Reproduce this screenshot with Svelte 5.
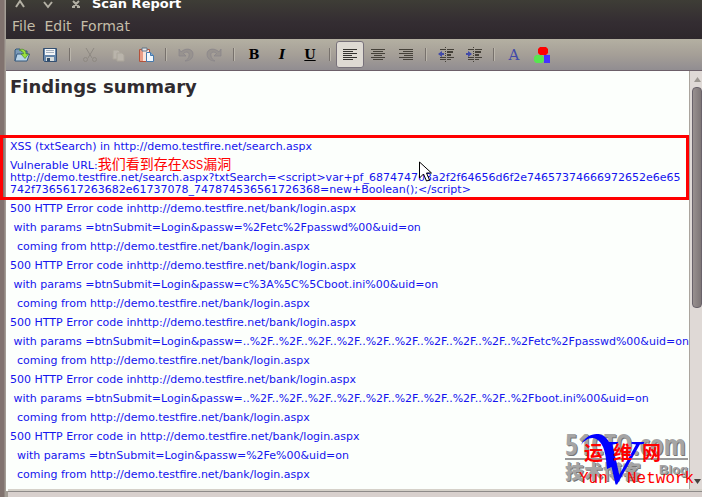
<script>
    const findings = [
        {
            title: '500 HTTP Error code inhttp://demo.testfire.net/bank/login.aspx',
            params: ' with params =btnSubmit=Login&passw=%2Fetc%2Fpasswd%00&uid=on'
        },
        {
            title: '500 HTTP Error code inhttp://demo.testfire.net/bank/login.aspx',
            params: ' with params =btnSubmit=Login&passw=c%3A%5C%5Cboot.ini%00&uid=on'
        },
        {
            title: '500 HTTP Error code inhttp://demo.testfire.net/bank/login.aspx',
            params: ' with params =btnSubmit=Login&passw=..%2F..%2F..%2F..%2F..%2F..%2F..%2F..%2F..%2F..%2Fetc%2Fpasswd%00&uid=on'
        },
        {
            title: '500 HTTP Error code inhttp://demo.testfire.net/bank/login.aspx',
            params: ' with params =btnSubmit=Login&passw=..%2F..%2F..%2F..%2F..%2F..%2F..%2F..%2F..%2F..%2Fboot.ini%00&uid=on'
        },
        {
            title: '500 HTTP Error code in http://demo.testfire.net/bank/login.aspx',
            params: '  with params =btnSubmit=Login&passw=%2Fe%00&uid=on'
        }
    ];
    const source = '  coming from http://demo.testfire.net/bank/login.aspx';
    const vulnerableUrl =
        'http://demo.testfire.net/search.aspx?txtSearch=<script>var+pf_687474703a2f2f64656d6f2e74657374666972652e6e65742f7365617263682e61737078_747874536561726368=new+Boolean();</' + 'script>';

    let align = 'left';
</script>

<div class="frame">
    <header>
        <div class="titlebar">
            <button aria-label="Minimize">
                <svg width="12" height="12" viewBox="0 0 12 12"><path d="M2 7l4-6 4 6" /></svg>
            </button>
            <button aria-label="Maximize">
                <svg width="12" height="12" viewBox="0 0 12 12"><path d="M2 2l4 5 4-5" /></svg>
            </button>
            <button aria-label="Close">
                <svg width="12" height="12" viewBox="0 0 12 12"><path d="M3 1l6 6M9 1L3 7M2 7h3M7 7h3" /></svg>
            </button>
            <span class="title">Scan Report</span>
        </div>
        <nav>
            <button>File</button>
            <button>Edit</button>
            <button>Format</button>
        </nav>
    </header>

    <div class="toolbar" role="toolbar">
        <button aria-label="Open">
            <svg width="16" height="16" viewBox="0 0 16 16">
                <path d="M1 14V3l1-1h4l1 2h6v4" fill="#7c9ab8" stroke="#35587c" />
                <path d="M1 14l2-7h12.500l-2.500 7z" fill="#b9d4e8" stroke="#35587c" />
                <path d="M5 3c4-2 7 0 7 4h2.500L11 11.500 7 7h2.500C9.500 5 8 4 5 3z" fill="#9be03c" stroke="#4b8a28" stroke-width=".7" />
            </svg>
        </button>
        <button aria-label="Save">
            <svg width="16" height="16" viewBox="0 0 16 16">
                <path d="M1.500 1.500h13v13h-12l-1-1z" fill="#6586aa" stroke="#344f70" />
                <path d="M3 2h10v6H3z" fill="#f4f6f7" />
                <path d="M4 3.500h8M4 5.500h8" stroke="#a4b1bf" />
                <path d="M4 10h8v4H4z" fill="#d8dddd" />
                <path d="M5 11h3v3H5z" fill="#304c6a" />
            </svg>
        </button>
        <i></i>
        <button aria-label="Cut" disabled>
            <svg width="16" height="16" viewBox="0 0 16 16" fill="none" stroke="#8e8982">
                <path d="M4 1l6 10M12 1L6 11" />
                <circle cx="3.500" cy="12.500" r="2" />
                <circle cx="12.500" cy="12.500" r="2" />
            </svg>
        </button>
        <button aria-label="Copy" disabled>
            <svg width="16" height="16" viewBox="0 0 16 16" fill="#b9b4ab" stroke="#aaa59a">
                <path d="M3 3h5l2 2v7H3z" />
                <path d="M7 6h5l2 2v6H7z" />
            </svg>
        </button>
        <button aria-label="Paste">
            <svg width="16" height="16" viewBox="0 0 16 16">
                <path d="M1.500 2.500h10v12h-10z" fill="#f9e4da" stroke="#b2523b" />
                <path d="M2 3h3v11H2z" fill="#e89c86" />
                <path d="M4 1h5v3H4z" fill="#e9e9e9" stroke="#5e7389" />
                <path d="M8.500 5.500h4l3 3v6h-7z" fill="#f2f8fc" stroke="#4779ac" />
                <path d="M12.500 5.500v3h3" fill="#82add1" stroke="#4779ac" />
            </svg>
        </button>
        <i></i>
        <button aria-label="Undo" disabled>
            <svg width="16" height="16" viewBox="0 0 16 16">
                <path d="M1 2v7h7L5.500 6.500C8 4 12 5 11 9c0 2-2 4-4 5 5 0 8-3 8-7 0-5-7-7-12-2z" fill="#98938f" stroke="#88848a" stroke-width=".7" />
            </svg>
        </button>
        <button aria-label="Redo" disabled>
            <svg width="16" height="16" viewBox="0 0 16 16">
                <path d="M15 2v7H8l2.500-2.500C8 4 4 5 5 9c0 2 2 4 4 5-5 0-8-3-8-7 0-5 7-7 12-2z" fill="#98938f" stroke="#88848a" stroke-width=".7" />
            </svg>
        </button>
        <i></i>
        <button class="letter bold">B</button>
        <button class="letter italic">I</button>
        <button class="letter underline">U</button>
        <i></i>
        <button class:active={align === 'left'} aria-label="Align left" on:click={() => (align = 'left')}>
            <svg width="16" height="16" viewBox="0 0 16 16" stroke="#34322f">
                <path d="M1 2.500h14M1 4.500h10M1 6.500h14M1 8.500h9M1 10.500h14M1 12.500h10" />
            </svg>
        </button>
        <button class:active={align === 'center'} aria-label="Align center" on:click={() => (align = 'center')}>
            <svg width="16" height="16" viewBox="0 0 16 16" stroke="#454139">
                <path d="M1 2.500h14M3 4.500h10M1 6.500h14M4 8.500h8M1 10.500h14M3 12.500h10" />
            </svg>
        </button>
        <button class:active={align === 'right'} aria-label="Align right" on:click={() => (align = 'right')}>
            <svg width="16" height="16" viewBox="0 0 16 16" stroke="#454139">
                <path d="M1 2.500h14M5 4.500h10M1 6.500h14M6 8.500h9M1 10.500h14M5 12.500h10" />
            </svg>
        </button>
        <i></i>
        <button aria-label="Decrease indent">
            <svg width="16" height="16" viewBox="0 0 16 16">
                <path d="M2 2.500h5M9 2.500h7M2 10.500h5M9 10.500h7M2 12.500h5M9 12.500h4" stroke="#454139" />
                <path d="M9 5h6M9 8h4" stroke="#454139" stroke-width="2" />
                <path d="M7.500 0v16" stroke="#454139" stroke-dasharray="1 1" />
                <path d="M0 7l4-3v2h2v2H4v2z" fill="#414aa8" />
            </svg>
        </button>
        <button aria-label="Increase indent">
            <svg width="16" height="16" viewBox="0 0 16 16">
                <path d="M2 2.500h5M9 2.500h7M2 10.500h5M9 10.500h7M2 12.500h5M9 12.500h4" stroke="#454139" />
                <path d="M9 5h6M9 8h4" stroke="#454139" stroke-width="2" />
                <path d="M7.500 0v16" stroke="#454139" stroke-dasharray="1 1" />
                <path d="M6 7L2 4v2H0v2h2v2z" fill="#414aa8" />
            </svg>
        </button>
        <i></i>
        <button class="letter font">A</button>
        <button aria-label="Color">
            <svg width="16" height="16" viewBox="0 0 16 16">
                <path d="M10 8h6v8h-6z" fill="#4632ff" />
                <path d="M2 8h6l2 3v3l-2 2H2l-2-2v-4z" fill="#57e64f" />
                <path d="M6 0h6l2 2v4l-2 2H6L4 6V2z" fill="#fe0000" />
            </svg>
        </button>
    </div>

    <div class="body">
        <main>
            <h1>Findings summary</h1>
            <section class="marked">
                <p>XSS (txtSearch) in http://demo.testfire.net/search.aspx</p>
                <p>Vulnerable URL:<span class="note">我们看到存在<small>XSS</small>漏洞</span><br />{vulnerableUrl}</p>
                <svg class="cursor" width="13" height="22" viewBox="0 0 13 22">
                    <path d="M.5 1v16l4-4 3 7 3-1-3-7h5z" fill="#fff" stroke="#000" />
                </svg>
            </section>
            {#each findings as finding}
                <p>{finding.title}</p>
                <p>{finding.params}</p>
                <p>{source}</p>
            {/each}
        </main>
        <div class="scrollbar">
            <svg width="7" height="5" viewBox="0 0 7 5"><path d="M0 5l3.500-5L7 5z" fill="#9c9791" /></svg>
            <div class="track"><div class="thumb"></div></div>
            <svg width="7" height="5" viewBox="0 0 7 5"><path d="M0 0l3.500 5L7 0z" fill="#45413e" /></svg>
        </div>
    </div>
    <footer></footer>

    <div class="blog">
        <strong>51CTO.com</strong>
        <div class="blog-row"><b>技术博客</b><span>Blog</span></div>
    </div>
    <div class="network">
        <svg width="36" height="54" viewBox="0 0 36 54">
            <path d="M0 12C6-1 22-3 28 9c3 6 4 14 5 24l-7 3C25 24 24 15 19 9 13 2 5 5 0 12z" fill="#00f" />
        </svg>
        <span class="vee">V</span>
        <div class="han"><span>运</span><span>维</span><span>网</span></div>
        <div class="latin">Yun  Network</div>
    </div>
</div>

<style>
    :global(body) {
        margin: 0;
        overflow: hidden;
    }

    .frame {
        position: relative;
        box-sizing: border-box;
        display: flex;
        flex-direction: column;
        height: 100vh;
        padding-left: 6px;
        overflow: hidden;
        background: linear-gradient(to right, #81736f 0, #81736f 4px, #a39d95 5px, #a39d95 6px);
        font-family: 'DejaVu Sans', 'Noto Sans CJK SC', sans-serif;
    }

    header {
        background: linear-gradient(#3e3d36, #342d32 22px, #2d272c);
        color: #c4bda8;
    }

    button {
        display: flex;
        align-items: center;
        justify-content: center;
        margin: 0;
        padding: 0;
        border: none;
        background: none;
        color: inherit;
        font: inherit;
    }

    .titlebar {
        display: flex;
        align-items: flex-end;
        height: 12px;
        overflow: hidden;
    }

    .titlebar button {
        width: 28px;
    }

    .titlebar svg {
        fill: none;
        stroke: #b3b0a4;
        stroke-width: 2;
    }

    .title {
        margin-left: 2px;
        color: #fff;
        font-size: 13px;
        font-weight: bold;
        line-height: 16px;
    }

    nav {
        display: flex;
        gap: 9px;
        height: 27px;
        padding: 0 6px;
        font-size: 14px;
    }

    .toolbar {
        display: flex;
        align-items: center;
        height: 31px;
        padding-left: 2px;
        border-bottom: 1px solid #6c6069;
        background: linear-gradient(#b4b0a2, #a59f97 50%, #918d91);
    }

    .toolbar button {
        box-sizing: border-box;
        width: 28px;
        height: 27px;
        border: 1px solid transparent;
        border-radius: 3px;
    }

    .toolbar button.active {
        border-color: #77717a;
        background: #dedad3;
    }

    .toolbar i {
        width: 1px;
        height: 13px;
        margin: 0 5px;
        border-left: 1px solid #77716c;
        background: #bbb6ac;
    }

    .toolbar .letter {
        color: #000;
        font-family: 'DejaVu Serif', serif;
        font-size: 13px;
        font-weight: bold;
    }

    .toolbar .italic {
        font-style: italic;
    }

    .toolbar .underline {
        text-decoration: underline;
    }

    .toolbar .font {
        color: #414aa8;
        font-size: 15px;
        font-weight: normal;
    }

    .body {
        display: flex;
        flex: 1;
        min-height: 0;
    }

    main {
        flex: 1;
        min-width: 0;
        padding: 3px 5px 0 4px;
        background: #fcfffc;
        color: #1414ee;
    }

    h1 {
        margin: 0 0 38px;
        color: #302c30;
        font-size: 18px;
        line-height: 26px;
    }

    p {
        margin: 0;
        padding: 3px 0 4px;
        font-size: 11px;
        line-height: 12px;
        white-space: pre;
    }

    .marked {
        position: relative;
    }

    .marked p {
        white-space: pre-wrap;
        word-break: break-all;
    }

    .marked::before {
        content: '';
        position: absolute;
        inset: -3px -5px 0 -10px;
        border: 3px solid #f00;
    }

    .note {
        color: #f00;
        font-family: 'Noto Sans CJK SC', sans-serif;
        font-size: 14px;
        line-height: 0;
    }

    .note small {
        font-family: 'Liberation Mono', monospace;
        font-size: 12px;
    }

    .cursor {
        position: absolute;
        top: 23px;
        left: 409px;
    }

    .scrollbar {
        box-sizing: border-box;
        display: flex;
        flex-direction: column;
        align-items: center;
        width: 13px;
        padding: 6px 0 7px 2px;
        border-left: 1px solid #aaa59d;
        background: #dfd9d6;
    }

    .track {
        flex: 1;
        width: 100%;
        padding: 5px 0;
    }

    .thumb {
        box-sizing: border-box;
        height: 57%;
        border: 1px solid #69626a;
        border-radius: 4px;
        background: linear-gradient(to right, #98908f, #7e7677);
    }

    footer {
        height: 5px;
        margin-left: 2px;
        border-top: 1px solid #8e8b89;
        background: #d8d0cd;
        box-shadow: 0 -2px #d5d1c9;
    }

    .blog {
        position: absolute;
        right: 14px;
        bottom: 11px;
        width: 123px;
        color: #a5a5a5;
        font-family: 'Liberation Sans', 'Noto Sans CJK SC', sans-serif;
        text-shadow: 1px 1px #777;
    }

    .blog strong {
        display: block;
        border-bottom: 2px solid #999;
        font-family: 'Liberation Sans Narrow', 'Open Sans Condensed', 'DejaVu Sans Condensed', sans-serif;
        font-size: 28px;
        line-height: 28px;
        white-space: nowrap;
    }

    .blog-row {
        display: flex;
        justify-content: space-between;
        font-size: 13px;
        font-weight: bold;
        line-height: 20px;
    }

    .blog-row b {
        font-size: 19px;
        line-height: 26px;
    }

    .network {
        position: absolute;
        right: 6px;
        bottom: 8px;
        width: 117px;
        height: 58px;
        color: #f00;
    }

    .network svg {
        position: absolute;
        top: 2px;
        left: 2px;
    }

    .vee {
        position: absolute;
        top: 0;
        left: 20px;
        color: #00f;
        font: italic 64px/64px 'Liberation Serif', serif;
    }

    .han {
        position: absolute;
        top: 10px;
        left: 5px;
        display: flex;
        gap: 10px;
        font: bold 19px/22px 'Noto Sans CJK SC', sans-serif;
    }

    .latin {
        position: absolute;
        bottom: 0;
        left: 0;
        font: 16px/20px 'Liberation Mono', monospace;
        white-space: pre;
    }
</style>
